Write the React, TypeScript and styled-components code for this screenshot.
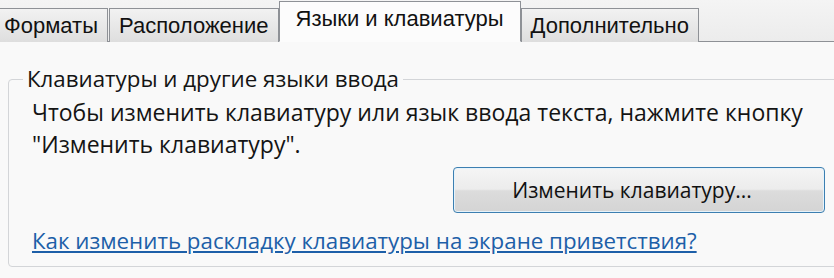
import styled, { createGlobalStyle, css } from "styled-components";

/*--------------------------
    Global
--------------------------*/
const GlobalStyle = createGlobalStyle`
    html, body {
        margin: 0;
        padding: 0;
        background: #f7f7f7;
    }
    #root {
        width: 834px;
        height: 278px;
        overflow: hidden;
    }
`;

const UiFont = `"Open Sans", "Noto Sans", sans-serif`;
const TabFont = `"Liberation Sans", Arial, sans-serif`;

/*--------------------------
    Styled
--------------------------*/
const Window = styled.div`
    display: flex;
    flex-direction: column;
    width: 834px;
    height: 278px;
    background: #f9f9f9;
`;
const TabStrip = styled.div`
    display: flex;
    align-items: flex-end;
    height: 42px;
    margin-left: -6px;
    border-bottom: 1px solid #8e9196;
    background: linear-gradient(#f4f4f4, #ececec);
    box-sizing: border-box;
`;
const Tab = styled.div<{ $active?: boolean }>`
    display: flex;
    align-items: center;
    box-sizing: border-box;
    height: 34px;
    padding: 0 9px;
    margin-bottom: -1px;
    margin-right: 1px;
    border: 1px solid #8e9196;
    border-bottom: none;
    background: linear-gradient(#f2f2f2, #dedede);
    color: #111;
    font-family: ${TabFont};
    font-size: 22px;

    ${(p) =>
        p.$active &&
        css`
            height: 41px;
            padding: 0 16px 6px;
            margin-left: -1px;
            margin-right: 0;
            background: #fcfcfc;
            border-bottom: 1px solid #fcfcfc;
        `}
`;
const Panel = styled.div`
    flex: 1;
    padding: 23px 0 0 8px;
    background: #f9f9f9;
`;
const Group = styled.fieldset`
    margin: 0 -20px 0 0;
    padding: 0 0 0 23px;
    height: 202px;
    box-sizing: border-box;
    border: 1px solid #d3d5d8;
    border-radius: 4px;
    font-family: ${UiFont};
    color: #141414;
`;
const GroupTitle = styled.legend`
    margin-left: -9px;
    padding: 0 4px;
    font-size: 22.3px;
    line-height: 28px;
`;
const Description = styled.div`
    margin-top: 3px;
    font-size: 23px;
    line-height: 32px;
`;
const ButtonRow = styled.div`
    display: flex;
    justify-content: flex-end;
    margin-top: 7px;
    padding-right: 28px;
`;
const ChangeButton = styled.button`
    width: 372px;
    height: 46px;
    padding: 0 14px 0 0;
    border: 1px solid #3c7fb1;
    border-radius: 4px;
    box-shadow: inset 0 0 0 1px #e6f3fb;
    background: linear-gradient(#f5f5f5 0%, #ececec 48%, #dcdcdc 52%, #d4d4d4 100%);
    color: #111;
    font-family: ${UiFont};
    font-size: 21px;
`;
const HelpLink = styled.a`
    display: block;
    margin-top: 14px;
    color: #1d5fa8;
    font-size: 22.3px;
    line-height: 28px;
    text-decoration: underline;
`;

/*--------------------------
    Main
--------------------------*/
const tabs = ["Форматы", "Расположение", "Языки и клавиатуры", "Дополнительно"];

const App = () => {
    return (
        <>
            <GlobalStyle />
            <Window>
                <TabStrip>
                    {tabs.map((t, i) => (
                        <Tab key={t} $active={i === 2}>
                            {t}
                        </Tab>
                    ))}
                </TabStrip>
                <Panel>
                    <Group>
                        <GroupTitle>Клавиатуры и другие языки ввода</GroupTitle>
                        <Description>
                            Чтобы изменить клавиатуру или язык ввода текста, нажмите кнопку
                            <br />
                            "Изменить клавиатуру".
                        </Description>
                        <ButtonRow>
                            <ChangeButton>Изменить клавиатуру...</ChangeButton>
                        </ButtonRow>
                        <HelpLink href="#">Как изменить раскладку клавиатуры на экране приветствия?</HelpLink>
                    </Group>
                </Panel>
            </Window>
        </>
    );
};

export default App;
